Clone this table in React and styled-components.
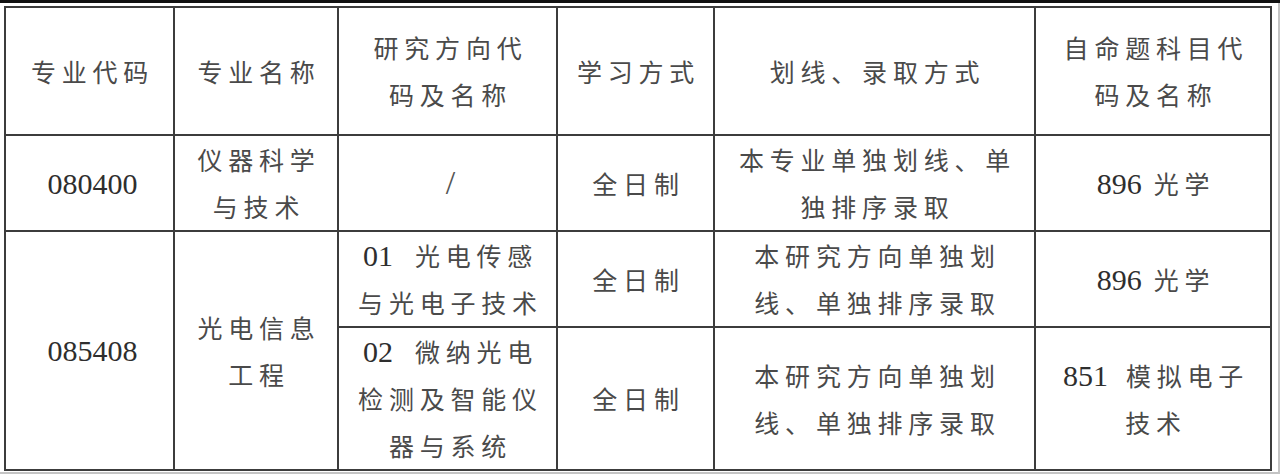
import React from "react";
import styled, { createGlobalStyle } from "styled-components";

const Global = createGlobalStyle`
  html, body { margin: 0; padding: 0; background: #ffffff; }
  body { width: 1280px; height: 474px; overflow: hidden; }
`;

const Page = styled.div`
  width: 1280px;
  height: 474px;
  background: #fff;
  display: flex;
  flex-direction: column;
`;

const TopBar = styled.div`
  height: 3px;
  background: #111;
  flex: none;
`;

const Frame = styled.div`
  width: 1274px;
  height: 467px;
  padding: 3px 0 0 4px;
  border-right: 2px solid #c4c4c4;
  border-bottom: 2px solid #c4c4c4;
  box-sizing: content-box;
`;

const Table = styled.table`
  border-collapse: collapse;
  table-layout: fixed;
  width: 1268px;
  font-family: "Noto Sans CJK SC", "Noto Sans CJK JP", sans-serif;
  font-weight: 400;
  font-size: 25px;
  color: #4a4a4a;
`;

const Row = styled.tr`
  height: ${(p) => p.$h}px;
`;

const Cell = styled.td`
  border: 2px solid #3c3c3c;
  padding: 0 0 0 6px;
  text-align: center;
  vertical-align: middle;
  line-height: 47px;
  letter-spacing: 5.8px;
  white-space: nowrap;
`;

const Num = styled.span`
  font-family: "Liberation Serif", "Times New Roman", serif;
  font-weight: 400;
  font-size: 30px;
  letter-spacing: 0;
  color: #2e2e2e;
  margin-right: ${(p) => p.$gap || 0}px;
`;

const Slash = styled.span`
  font-family: "Liberation Serif", "Times New Roman", serif;
  font-size: 34px;
  letter-spacing: 0;
  color: #555;
`;

const widths = [169, 164, 219, 157, 321, 236];

export default function App() {
  return (
    <>
      <Global />
      <Page>
        <TopBar />
        <Frame>
          <Table>
            <colgroup>
              {widths.map((w, i) => (
                <col key={i} style={{ width: w }} />
              ))}
            </colgroup>
            <tbody>
              <Row $h={128}>
                <Cell>专业代码</Cell>
                <Cell>专业名称</Cell>
                <Cell>
                  研究方向代
                  <br />
                  码及名称
                </Cell>
                <Cell>学习方式</Cell>
                <Cell>划线、录取方式</Cell>
                <Cell>
                  自命题科目代
                  <br />
                  码及名称
                </Cell>
              </Row>
              <Row $h={95}>
                <Cell>
                  <Num>080400</Num>
                </Cell>
                <Cell>
                  仪器科学
                  <br />
                  与技术
                </Cell>
                <Cell>
                  <Slash>/</Slash>
                </Cell>
                <Cell>全日制</Cell>
                <Cell>
                  本专业单独划线、单
                  <br />
                  独排序录取
                </Cell>
                <Cell>
                  <Num $gap={12}>896</Num>光学
                </Cell>
              </Row>
              <Row $h={96}>
                <Cell rowSpan={2}>
                  <Num>085408</Num>
                </Cell>
                <Cell rowSpan={2}>
                  光电信息
                  <br />
                  工程
                </Cell>
                <Cell>
                  <Num $gap={22}>01</Num>光电传感
                  <br />
                  与光电子技术
                </Cell>
                <Cell>全日制</Cell>
                <Cell>
                  本研究方向单独划
                  <br />
                  线、单独排序录取
                </Cell>
                <Cell>
                  <Num $gap={12}>896</Num>光学
                </Cell>
              </Row>
              <Row $h={143}>
                <Cell>
                  <Num $gap={22}>02</Num>微纳光电
                  <br />
                  检测及智能仪
                  <br />
                  器与系统
                </Cell>
                <Cell>全日制</Cell>
                <Cell>
                  本研究方向单独划
                  <br />
                  线、单独排序录取
                </Cell>
                <Cell>
                  <Num $gap={18}>851</Num>模拟电子
                  <br />
                  技术
                </Cell>
              </Row>
            </tbody>
          </Table>
        </Frame>
      </Page>
    </>
  );
}
